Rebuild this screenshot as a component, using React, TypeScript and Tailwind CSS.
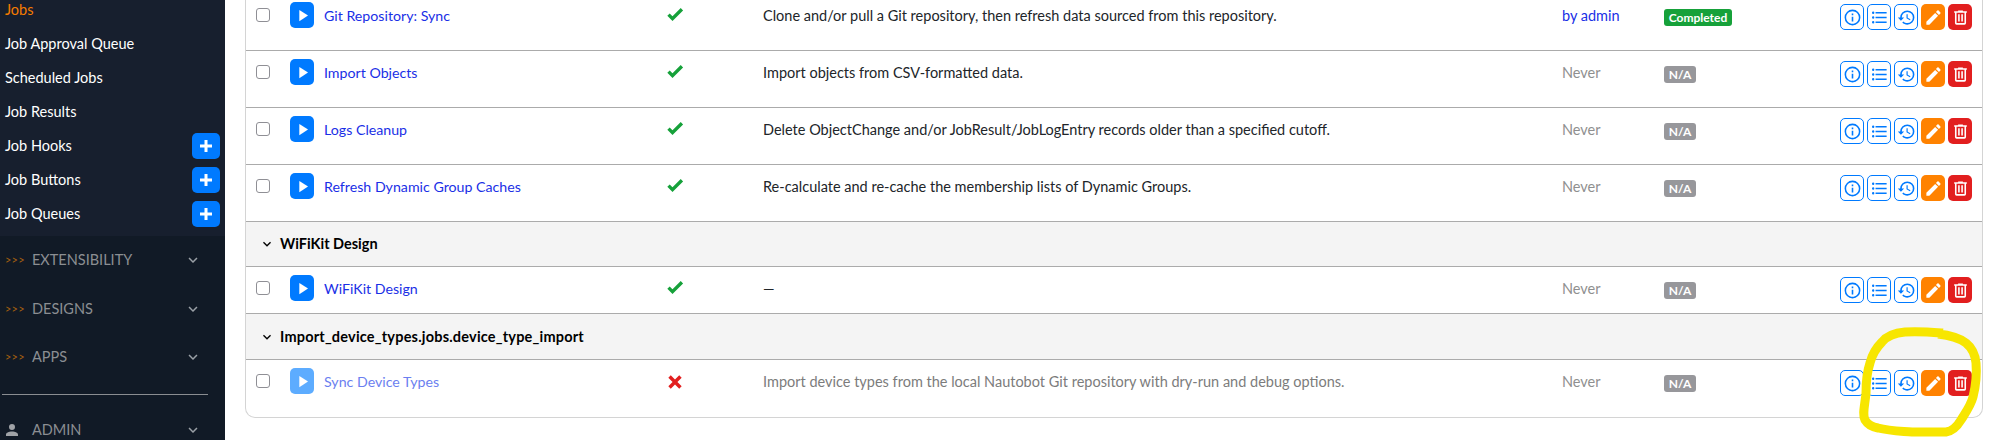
import React from "react";

const P = {
  info: "M11,9H13V7H11M12,20C7.59,20 4,16.41 4,12C4,7.59 7.59,4 12,4C16.41,4 20,7.59 20,12C20,16.41 16.41,20 12,20M12,2A10,10 0 0,0 2,12A10,10 0 0,0 12,22A10,10 0 0,0 22,12A10,10 0 0,0 12,2M11,17H13V11H11V17Z",
  list: "M7,5H21V7H7V5M7,13V11H21V13H7M4,4.5A1.5,1.5 0 0,1 5.5,6A1.5,1.5 0 0,1 4,7.5A1.5,1.5 0 0,1 2.5,6A1.5,1.5 0 0,1 4,4.5M4,10.5A1.5,1.5 0 0,1 5.5,12A1.5,1.5 0 0,1 4,13.5A1.5,1.5 0 0,1 2.5,12A1.5,1.5 0 0,1 4,10.5M7,19V17H21V19H7M4,16.5A1.5,1.5 0 0,1 5.5,18A1.5,1.5 0 0,1 4,19.5A1.5,1.5 0 0,1 2.5,18A1.5,1.5 0 0,1 4,16.5Z",
  history: "M13.5,8H12V13L16.28,15.54L17,14.33L13.5,12.25V8M13,3A9,9 0 0,0 4,12H1L4.96,16.03L9,12H6A7,7 0 0,1 13,5A7,7 0 0,1 20,12A7,7 0 0,1 13,19C11.07,19 9.32,18.21 8.06,16.94L6.64,18.36C8.27,20 10.5,21 13,21A9,9 0 0,0 22,12A9,9 0 0,0 13,3",
  pencil: "M20.71,7.04C21.1,6.65 21.1,6 20.71,5.63L18.37,3.29C18,2.9 17.35,2.9 16.96,3.29L15.12,5.12L18.87,8.87M3,17.25V21H6.75L17.81,9.93L14.06,6.18L3,17.25Z",
  trash: "M9,3V4H4V6H5V19A2,2 0 0,0 7,21H17A2,2 0 0,0 19,19V6H20V4H15V3H9M7,6H17V19H7V6M9,8V17H11V8H9M13,8V17H15V8H13Z",
  check: "M9,20.42L2.79,14.21L5.62,11.38L9,14.77L18.88,4.88L21.71,7.71L9,20.42Z",
  close: "M20 6.91L17.09 4L12 9.09L6.91 4L4 6.91L9.09 12L4 17.09L6.91 20L12 14.91L17.09 20L20 17.09L14.91 12L20 6.91Z",
  play: "M8,5.14V19.14L19,12.14L8,5.14Z",
  plus: "M20 14H14V20H10V14H4V10H10V4H14V10H20V14Z",
  chevron: "M7.41,8.58L12,13.17L16.59,8.58L18,10L12,16L6,10L7.41,8.58Z",
  account: "M12,4A4,4 0 0,1 16,8A4,4 0 0,1 12,12A4,4 0 0,1 8,8A4,4 0 0,1 12,4M12,14C16.42,14 20,15.79 20,18V20H4V18C4,15.79 7.58,14 12,14Z",
};

function Icon({ d, className }: { d: string; className: string }) {
  return (
    <svg viewBox="0 0 24 24" fill="currentColor" className={className}>
      <path d={d} />
    </svg>
  );
}

function SideItem({ label, active, plus }: { label: string; active?: boolean; plus?: boolean }) {
  return (
    <div className="flex h-[34px] items-center justify-between pl-[5px] pr-[5px]">
      <span className={active ? "text-[#f57c00]" : "text-white"}>{label}</span>
      {plus && (
        <span className="flex h-[26px] w-[28px] items-center justify-center rounded-[5px] bg-[#007aff] text-white">
          <Icon d={P.plus} className="h-[18px] w-[18px]" />
        </span>
      )}
    </div>
  );
}

function SideSection({ label }: { label: string }) {
  return (
    <div className="flex h-[48.5px] shrink-0 items-center pl-[5px] pr-[23px] text-[#8b8e92]">
      <span className="w-[27px] text-[11px] tracking-[0.2px] text-[#a5600f]">{">>>"}</span>
      <span className="flex-1">{label}</span>
      <Icon d={P.chevron} className="h-[18px] w-[18px] text-[#9aa0a6]" />
    </div>
  );
}

function Action({ d, kind }: { d: string; kind: "outline" | "orange" | "red" }) {
  const cls =
    kind === "outline"
      ? "border border-[#007aff] bg-white text-[#007aff]"
      : kind === "orange"
        ? "bg-[#ff8200] text-white"
        : "bg-[#e21f1f] text-white";
  return (
    <span className={`flex h-[26px] w-[24px] items-center justify-center rounded-[5px] ${cls}`}>
      <Icon d={d} className="h-[19px] w-[19px]" />
    </span>
  );
}

type Row = {
  name: string;
  desc: string;
  lastRun?: string;
  status?: string;
  disabled?: boolean;
  short?: boolean;
  last?: boolean;
  first?: boolean;
};

function JobRow({ name, desc, lastRun, status, disabled, short, last, first }: Row) {
  return (
    <div
      className={`grid grid-cols-[34px_377px_96px_799px_102px_176px_1fr] items-start pl-[10px] ${short ? "h-[47px]" : "h-[57px]"} ${last ? "" : "border-b border-[#ababab]"} ${first ? "mt-[-6px]" : ""}`}
    >
      <span className="mt-[14px] block h-[14px] w-[14px] rounded-[3px] border border-[#8f8f95] bg-white" />
      <div className="mt-[8px] flex items-start">
        <span className={`flex h-[26px] w-[24px] items-center justify-center rounded-[5px] text-white ${disabled ? "bg-[#5dacff]" : "bg-[#007aff]"}`}>
          <Icon d={P.play} className="h-[19px] w-[19px]" />
        </span>
        <span className={`ml-[10px] mt-[4px] text-[14.2px] ${disabled ? "text-[#6b7ff0]" : "text-[#1a2fe6]"}`}>{name}</span>
      </div>
      <div className="mt-[5px]">
        {disabled ? (
          <Icon d={P.close} className="ml-[-2px] mt-[7px] h-[20px] w-[20px] text-[#e21f1f]" />
        ) : (
          <Icon d={P.check} className="ml-[-2px] mt-[5px] h-[20px] w-[20px] text-[#16a13a]" />
        )}
      </div>
      <span className={`mt-[12px] ${disabled ? "text-[#7c7c7c]" : "text-[#212529]"}`}>{desc}</span>
      <span className={`mt-[12px] ${status ? "text-[#1a2fe6]" : "text-[#8f8f8f]"}`}>{lastRun ?? "Never"}</span>
      <span
        className={`mt-[15px] flex h-[17px] items-center justify-center justify-self-start rounded-[3px] text-[12px] font-bold text-white ${status ? "w-[68px] bg-[#16a13a]" : "w-[32px] bg-[#97979b]"}`}
      >
        {status ?? "N/A"}
      </span>
      <div className="mt-[10px] flex gap-[3px]">
        <Action d={P.info} kind="outline" />
        <Action d={P.list} kind="outline" />
        <Action d={P.history} kind="outline" />
        <Action d={P.pencil} kind="orange" />
        <Action d={P.trash} kind="red" />
      </div>
    </div>
  );
}

function GroupRow({ label, tall }: { label: string; tall?: boolean }) {
  return (
    <div className={`flex items-center border-b border-[#ababab] bg-[#f4f4f4] pl-[13px] ${tall ? "h-[46px]" : "h-[45px]"}`}>
      <Icon d={P.chevron} className="h-[16px] w-[16px] text-black" />
      <span className={`ml-[5px] font-bold text-black ${tall ? "tracking-[0.2px]" : ""}`}>{label}</span>
    </div>
  );
}

export default function App() {
  return (
    <div className="relative flex h-[440px] w-[1993px] overflow-hidden bg-white font-['Lato','Noto_Sans',sans-serif] text-[14.5px] leading-[20px]">
      <aside className="flex w-[225px] shrink-0 flex-col bg-[#111a26]">
        <div className="mt-[-7px] shrink-0 bg-[#171f2e] pb-[5px]">
          <SideItem label="Jobs" active />
          <SideItem label="Job Approval Queue" />
          <SideItem label="Scheduled Jobs" />
          <SideItem label="Job Results" />
          <SideItem label="Job Hooks" plus />
          <SideItem label="Job Buttons" plus />
          <SideItem label="Job Queues" plus />
        </div>
        <SideSection label="EXTENSIBILITY" />
        <SideSection label="DESIGNS" />
        <SideSection label="APPS" />
        <div className="ml-[2px] mt-[12px] h-px w-[206px] shrink-0 bg-[#8a8d91]" />
        <div className="mt-[11px] flex h-[48px] shrink-0 items-center pl-[5px] pr-[23px] text-[#8b8e92]">
          <Icon d={P.account} className="ml-[-2px] mr-[10px] h-[18px] w-[18px] text-[#a0a3a7]" />
          <span className="ml-[1px] flex-1">ADMIN</span>
          <Icon d={P.chevron} className="h-[18px] w-[18px] text-[#9aa0a6]" />
        </div>
      </aside>
      <main className="ml-[20px] mr-[10px] flex-1">
        <div className="rounded-b-[10px] border-x border-b border-[#d4d4d4]">
          <JobRow first name="Git Repository: Sync" desc="Clone and/or pull a Git repository, then refresh data sourced from this repository." lastRun="by admin" status="Completed" />
          <JobRow name="Import Objects" desc="Import objects from CSV-formatted data." />
          <JobRow name="Logs Cleanup" desc="Delete ObjectChange and/or JobResult/JobLogEntry records older than a specified cutoff." />
          <JobRow name="Refresh Dynamic Group Caches" desc="Re-calculate and re-cache the membership lists of Dynamic Groups." />
          <GroupRow label="WiFiKit Design" />
          <JobRow short name="WiFiKit Design" desc="—" />
          <GroupRow tall label="Import_device_types.jobs.device_type_import" />
          <JobRow last disabled name="Sync Device Types" desc="Import device types from the local Nautobot Git repository with dry-run and debug options." />
        </div>
      </main>
      <svg className="pointer-events-none absolute left-0 top-0 h-[440px] w-[1993px]" viewBox="0 0 1993 440" fill="none">
        <path
          d="M1943 333 C1930 332 1918 331 1905 332 C1893 333 1886 337 1882 342 C1875 349 1872 355 1870 363 C1866 375 1866 385 1866 393 C1865 405 1862 414 1865 420 C1868 425 1872 427 1878 428 C1890 431 1900 431 1912 432 L1946 432 C1953 431 1958 425 1961 420 C1966 412 1971 405 1973 397 C1976 385 1977 375 1976 363 C1975 353 1971 347 1966 343 C1958 337 1948 335 1938 334"
          stroke="#f7e600"
          strokeWidth="9"
        />
      </svg>
    </div>
  );
}
